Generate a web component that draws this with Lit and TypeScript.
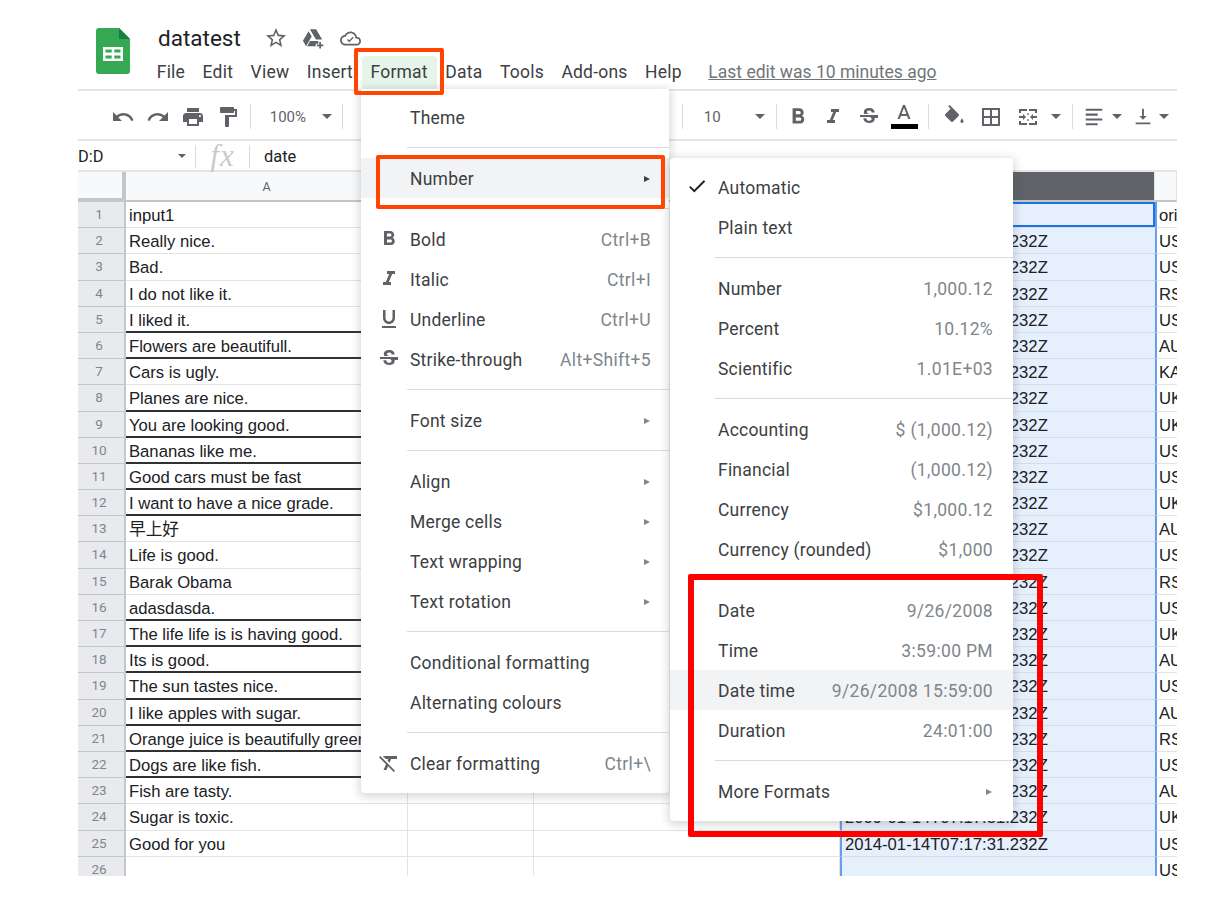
import { LitElement, css, html, svg, nothing } from 'lit';
import { customElement } from 'lit/decorators.js';
import { classMap } from 'lit/directives/class-map.js';

const ICONS: Record<string, string> = {
  undo: 'M12.5 8c-2.65 0-5.05.99-6.9 2.6L2 7v9h9l-3.62-3.62c1.39-1.16 3.16-1.88 5.12-1.88 3.54 0 6.55 2.31 7.6 5.5l2.37-.78C21.08 11.03 17.15 8 12.5 8z',
  redo: 'M18.4 10.6C16.55 8.99 14.15 8 11.5 8c-4.65 0-8.58 3.03-9.96 7.22L3.9 16c1.05-3.19 4.05-5.5 7.6-5.5 1.95 0 3.73.72 5.12 1.88L13 16h9V7l-3.6 3.6z',
  print: 'M19 8H5c-1.66 0-3 1.34-3 3v6h4v4h12v-4h4v-6c0-1.66-1.34-3-3-3zm-3 11H8v-5h8v5zm3-7c-.55 0-1-.45-1-1s.45-1 1-1 1 .45 1 1-.45 1-1 1zm-1-9H6v4h12V3z',
  paint: 'M18 4V3c0-.55-.45-1-1-1H5c-.55 0-1 .45-1 1v4c0 .55.45 1 1 1h12c.55 0 1-.45 1-1V6h1v4H9v11c0 .55.45 1 1 1h2c.55 0 1-.45 1-1v-9h8V4h-3z',
  star: 'M22 9.24l-7.19-.62L12 2 9.19 8.63 2 9.24l5.46 4.73L5.82 21 12 17.27 18.18 21l-1.63-7.03L22 9.24zM12 15.4l-3.76 2.27 1-4.28-3.32-2.88 4.38-.38L12 6.1l1.71 4.04 4.38.38-3.32 2.88 1 4.28L12 15.4z',
  drive: 'M8.6 2.5h6.8l6.6 11.2h-6.8zM7.2 4.6 1 15.1l3.4 5.9 6.2-10.6zM8.8 15.4 5.6 21h9.4v-2.6h2.8v-3zM18.8 16.4h1.9v2.6h2.6v1.9h-2.6v2.6h-1.9v-2.6h-2.6V19h2.6z',
  cloud: 'M19.35 10.04C18.67 6.59 15.64 4 12 4 9.11 4 6.6 5.64 5.35 8.04 2.34 8.36 0 10.91 0 14c0 3.31 2.69 6 6 6h13c2.76 0 5-2.24 5-5 0-2.64-2.05-4.78-4.65-4.96zM19 18H6c-2.21 0-4-1.79-4-4s1.79-4 4-4h.71C7.37 7.69 9.48 6 12 6c3.04 0 5.5 2.46 5.5 5.5v.5H19c1.66 0 3 1.34 3 3s-1.34 3-3 3zM10.6 16.2 8 13.6l1.1-1.1 1.5 1.5 4-4 1.1 1.1z',
  bold: 'M15.6 10.79c.97-.67 1.65-1.77 1.65-2.79 0-2.26-1.75-4-4-4H7v14h7.04c2.09 0 3.71-1.7 3.71-3.79 0-1.52-.86-2.82-2.15-3.42zM10 6.5h3c.83 0 1.5.67 1.5 1.5s-.67 1.5-1.5 1.5h-3v-3zm3.5 9H10v-3h3.5c.83 0 1.5.67 1.5 1.5s-.67 1.5-1.5 1.5z',
  italic: 'M10 4v3h2.21l-3.42 8H6v3h8v-3h-2.21l3.42-8H18V4z',
  strike: 'M6.85 7.08C6.85 4.37 9.45 3 12.24 3c1.64 0 3 .49 3.9 1.28.77.65 1.46 1.73 1.46 3.24h-3.01c0-.31-.05-.59-.15-.85-.29-.86-1.2-1.28-2.25-1.28-1.86 0-2.34 1.02-2.34 1.7 0 .48.25.88.74 1.21.38.25.77.48 1.41.7H7.39c-.21-.34-.54-.89-.54-1.92zM21 12v-2H3v2h9.62c1.15.45 1.96.75 1.96 1.97 0 1-.81 1.67-2.28 1.67-1.54 0-2.93-.54-2.93-2.51H6.4c0 .55.08 1.13.24 1.58.81 2.29 3.32 3.3 5.67 3.3 2.25 0 5.11-.95 5.35-3.72.03-.47.01-.9-.07-1.29H21z',
  underline: 'M12 17c3.31 0 6-2.69 6-6V3h-2.5v8c0 1.93-1.57 3.5-3.5 3.5S8.5 12.93 8.5 11V3H6v8c0 3.31 2.69 6 6 6zm-7 2v2h14v-2H5z',
  colorA: 'M11 2 5.5 16h2.25l1.12-3h6.25l1.12 3h2.25L13 2h-2zm-1.38 9L12 4.67 14.38 11H9.62z',
  fill: 'M16.56 8.94 7.62 0 6.21 1.41l2.38 2.38-5.15 5.15c-.59.59-.59 1.54 0 2.12l5.5 5.5c.29.29.68.44 1.06.44s.77-.15 1.06-.44l5.5-5.5c.59-.58.59-1.53 0-2.12zM20 13.5s-1.6 1.7-1.6 2.8c0 .9.7 1.6 1.6 1.6s1.6-.7 1.6-1.6c0-1.1-1.6-2.8-1.6-2.8z',
  borders: 'M3 3v18h18V3H3zm8 16H5v-6h6v6zm0-8H5V5h6v6zm8 8h-6v-6h6v6zm0-8h-6V5h6v6z',
  merge: 'M3 4h8v2H5v2H3zM13 4h8v4h-2V6h-6zM3 16h2v2h6v2H3zM19 16h2v4h-8v-2h6zM3 11h4V9l3 3-3 3v-2H3zM21 11h-4V9l-3 3 3 3v-2h4zM11.400 8h1.200v2h-1.200zM11.400 14h1.200v2h-1.200z',
  align: 'M3 3h18v2.200H3zM3 8.300h13v2.200H3zM3 13.600h18v2.200H3zM3 18.900h13v2.200H3z',
  valign: 'M16 11h-3V3h-2v8H8l4 4zM4 18v2h16v-2z',
  clear: 'M3.27 5 2 6.27l6.97 6.97L6.5 19h3l1.57-3.66L16.73 21 18 19.73 3.55 5.27zM6 5v.18L8.82 8h2.4l-.72 1.68 2.1 2.1L14.21 8H20V5z',
  check: 'M9 16.17 4.83 12l-1.42 1.41L9 19 21 7l-1.41-1.41z',
};

const icon = (name: string, size = 24) => html`<svg
  width=${size}
  height=${size}
  viewBox="0 0 24 24"
  fill="currentColor"
>
  ${svg`<path d=${ICONS[name]}></path>`}
</svg>`;

interface MenuRow {
  label?: string;
  hint?: string;
  icon?: string;
  arrow?: boolean;
  check?: boolean;
  active?: boolean;
  sep?: boolean;
}

const SEP: MenuRow = { sep: true };

const FORMAT_MENU: MenuRow[] = [
  { label: 'Theme' },
  SEP,
  { label: 'Number', arrow: true, active: true },
  SEP,
  { label: 'Bold', hint: 'Ctrl+B', icon: 'bold' },
  { label: 'Italic', hint: 'Ctrl+I', icon: 'italic' },
  { label: 'Underline', hint: 'Ctrl+U', icon: 'underline' },
  { label: 'Strike-through', hint: 'Alt+Shift+5', icon: 'strike' },
  SEP,
  { label: 'Font size', arrow: true },
  SEP,
  { label: 'Align', arrow: true },
  { label: 'Merge cells', arrow: true },
  { label: 'Text wrapping', arrow: true },
  { label: 'Text rotation', arrow: true },
  SEP,
  { label: 'Conditional formatting' },
  { label: 'Alternating colours' },
  SEP,
  { label: 'Clear formatting', hint: 'Ctrl+\\', icon: 'clear' },
];

const NUMBER_MENU: MenuRow[] = [
  { label: 'Automatic', check: true },
  { label: 'Plain text' },
  SEP,
  { label: 'Number', hint: '1,000.12' },
  { label: 'Percent', hint: '10.12%' },
  { label: 'Scientific', hint: '1.01E+03' },
  SEP,
  { label: 'Accounting', hint: '$ (1,000.12)' },
  { label: 'Financial', hint: '(1,000.12)' },
  { label: 'Currency', hint: '$1,000.12' },
  { label: 'Currency (rounded)', hint: '$1,000' },
  SEP,
  { label: 'Date', hint: '9/26/2008' },
  { label: 'Time', hint: '3:59:00 PM' },
  { label: 'Date time', hint: '9/26/2008 15:59:00', active: true },
  { label: 'Duration', hint: '24:01:00' },
  SEP,
  { label: 'More Formats', arrow: true },
];

const INPUTS = [
  'input1', 'Really nice.', 'Bad.', 'I do not like it.', 'I liked it.',
  'Flowers are beautifull.', 'Cars is ugly.', 'Planes are nice.',
  'You are looking good.', 'Bananas like me.', 'Good cars must be fast',
  'I want to have a nice grade.', '早上好', 'Life is good.', 'Barak Obama',
  'adasdasda.', 'The life life is is having good.', 'Its is good.',
  'The sun tastes nice.', 'I like apples with sugar.',
  'Orange juice is beautifully green', 'Dogs are like fish.', 'Fish are tasty.',
  'Sugar is toxic.', 'Good for you', '',
];

const ORIGINS = [
  'origin', 'USA', 'USA', 'RSA', 'USA', 'AUS', 'KAZ', 'UKR', 'UKR', 'USA', 'USA',
  'UKR', 'AUS', 'USA', 'RSA', 'USA', 'UKR', 'AUS', 'USA', 'AUS', 'RSA', 'USA',
  'AUS', 'UKR', 'USA', 'USA',
];

// rows whose A cell has a dark bottom border
const DARK_ROWS = new Set([5, 6, 8, 9, 10, 11, 12, 16, 17, 18, 19, 20, 21, 22]);

@customElement('app-root')
export class AppRoot extends LitElement {
  static styles = css`
    :host {
      display: block;
      width: 1212px;
      height: 921px;
      padding: 20px 0 0 78px;
      box-sizing: border-box;
      background: #fff;
      font-family: Roboto, sans-serif;
      color: #3c4043;
    }

    .frame {
      position: relative;
      width: 1099px;
      height: 856px;
      overflow: hidden;
    }

    .header {
      display: flex;
      height: 71px;
      box-sizing: border-box;
      border-bottom: 2px solid #e4e5e6;
    }

    .logo {
      margin: 8px 28px 0 18px;
    }

    .title-row {
      display: flex;
      align-items: center;
      height: 36px;
    }

    .title {
      font-size: 22.5px;
      color: #202124;
      width: 106px;
    }

    .title-icons {
      display: flex;
      gap: 13px;
      color: #5f6368;
    }

    .title-icon {
      display: flex;
      justify-content: center;
      align-items: center;
      width: 24px;
      height: 24px;
    }

    .menubar {
      display: flex;
      align-items: center;
      margin-left: -10px;
      height: 33px;
      font-size: 17.5px;
      letter-spacing: 0.22px;
    }

    .menubar span {
      padding: 0 8.75px;
      line-height: 33px;
      white-space: nowrap;
    }

    .menubar .open {
      background: #e6f4ea;
      border-radius: 4px 4px 0 0;
    }

    .menubar .last-edit {
      margin-left: 9px;
      color: #70757a;
      letter-spacing: 0;
      text-decoration: underline;
    }

    .toolbar {
      display: flex;
      align-items: center;
      height: 50px;
      padding: 3px 0 0 27px;
      box-sizing: border-box;
      border-bottom: 2px solid #e4e5e6;
      color: #5f6368;
      white-space: nowrap;
    }

    .tool {
      flex: none;
      display: flex;
      justify-content: center;
      align-items: center;
      width: 35.5px;
    }

    .tool.narrow {
      width: 35.2px;
    }

    .tool.color {
      flex-direction: column;
      color: #5f6368;
      margin-top: -2px;
    }

    .bar {
      width: 27px;
      height: 5px;
      margin-top: -3px;
      background: #000;
    }

    .caret {
      flex: none;
      width: 0;
      height: 0;
      border: 5px solid transparent;
      border-top-color: #5f6368;
      border-bottom: none;
    }

    .divider {
      flex: none;
      width: 1px;
      height: 25px;
      background: #dadce0;
    }

    .zoom-val {
      flex: none;
      font-size: 15px;
      width: 52px;
      margin-left: 19px;
    }

    .font-size {
      flex: none;
      font-size: 15px;
      width: 50px;
      margin-left: 21px;
    }

    .formula {
      display: flex;
      align-items: center;
      height: 31px;
      padding-top: 1px;
      box-sizing: border-box;
      border-bottom: 2px solid #e4e5e6;
      font-size: 16.4px;
      color: #202124;
    }

    .name-box {
      width: 100px;
    }

    .formula .caret {
      border-width: 4px;
      border-bottom: none;
      margin-right: 9px;
    }

    .fx {
      width: 53px;
      text-align: center;
      font: italic 31px/28px 'Liberation Serif', serif;
      letter-spacing: 1px;
      color: #c9cbcc;
    }

    .formula .divider {
      height: 23px;
    }

    .formula-value {
      margin-left: 14px;
    }

    .grid {
      display: grid;
      grid-template-columns: 48px 282px 126px 306px 315px 22px;
      grid-template-rows: 30px;
      grid-auto-rows: 26.2px;
      font-family: 'Liberation Sans', 'Noto Sans CJK SC', sans-serif;
      font-size: 16.67px;
      color: #202124;
    }

    .cell {
      box-sizing: border-box;
      padding-left: 3px;
      line-height: 27px;
      border-right: 1px solid #e2e3e3;
      border-bottom: 1px solid #e2e3e3;
      white-space: nowrap;
      overflow: hidden;
    }

    .cell.dark {
      border-bottom: 2px solid #2f3133;
    }

    .cell.sel {
      background: #e6effc;
      border-bottom-color: #d6dde8;
      border-right: none;
      border-left: 2px solid #6a9cec;
      padding-left: 3px;
    }

    .cell.last {
      border-left: 2px solid #6a9cec;
      border-right: none;
      padding-left: 2px;
    }

    .cell.active {
      box-shadow: inset 0 0 0 2px #1a73e8;
    }

    .corner {
      background: #f8f9fa;
      border-right: 4px solid #c4c6c8;
      border-bottom: 4px solid #c4c6c8;
    }

    .col-head {
      padding: 0;
      background: #f8f9fa;
      text-align: center;
      font: 12.5px/29px Roboto, sans-serif;
      color: #5f6368;
      border-bottom: 2px solid #c4c6c8;
    }

    .col-head.sel-head {
      background: #5f6368;
      color: #fff;
    }

    .row-num {
      padding: 0 4px 0 0;
      background: #e8eaed;
      text-align: center;
      font: 13.5px/25px Roboto, sans-serif;
      color: #80868b;
      border-right: 2px solid #c4c6c8;
      border-bottom: 1px solid #c4c6c8;
    }

    .menu {
      position: absolute;
      box-sizing: border-box;
      padding: 8px 0 10px;
      background: #fff;
      border-radius: 0 0 4px 4px;
      box-shadow: 0 2px 8px 2px rgba(60, 64, 67, 0.2);
      font-size: 17.5px;
      letter-spacing: 0.22px;
    }

    .menu.format {
      left: 283px;
      top: 69px;
      width: 308px;
      height: 704px;
    }

    .menu.number {
      left: 592px;
      top: 138px;
      width: 343px;
      height: 663px;
      padding-top: 9px;
      border-radius: 4px;
    }

    .row {
      position: relative;
      display: flex;
      align-items: center;
      justify-content: space-between;
      height: 39px;
      padding: 1px 18px 0 49px;
    }

    .number .row {
      padding: 1px 20px 0 48px;
    }

    .row.active {
      background: #f1f3f4;
    }

    .hint {
      color: #80868b;
      letter-spacing: 0.34px;
    }

    .row-icon {
      position: absolute;
      left: 16px;
      top: 8px;
      display: flex;
      color: #5f6368;
    }

    .number .row-icon {
      left: 16px;
      color: #202124;
    }

    .arrow {
      width: 0;
      height: 0;
      border-left: 6px solid #80868b;
      border-top: 3px solid transparent;
      border-bottom: 3px solid transparent;
      margin-right: 1px;
    }

    .row.active .arrow {
      border-left-color: #3c4043;
    }

    .sep {
      height: 1px;
      margin: 10px 0 10px 46px;
      background: #dadce0;
    }

    .number .sep {
      margin-left: 45px;
    }

    .mark {
      position: absolute;
      box-sizing: border-box;
      pointer-events: none;
    }

    .mark.tab {
      left: 276px;
      top: 28px;
      width: 90px;
      height: 47px;
      border: 4px solid #ff4500;
      border-radius: 2px;
    }

    .mark.item {
      left: 298px;
      top: 135px;
      width: 289px;
      height: 54px;
      border: 4px solid #ff4500;
      border-radius: 2px;
    }

    .mark.range {
      left: 610px;
      top: 554px;
      width: 355px;
      height: 263px;
      border: 6px solid #ff0000;
      border-radius: 2px;
    }
  `;

  private renderRow(r: MenuRow) {
    if (r.sep) return html`<div class="sep"></div>`;
    return html`<div class=${classMap({ row: true, active: !!r.active })}>
      ${r.icon ? html`<span class="row-icon">${icon(r.icon, 24)}</span>` : nothing}
      ${r.check ? html`<span class="row-icon">${icon('check', 22)}</span>` : nothing}
      <span>${r.label}</span>
      ${r.hint ? html`<span class="hint">${r.hint}</span>` : nothing}
      ${r.arrow ? html`<span class="arrow"></span>` : nothing}
    </div>`;
  }

  private renderGrid() {
    // column E is so narrow here that its letter falls outside the crop
    const heads = ['A', 'B', 'C', 'D', ''];
    return html`<div class="grid">
      <div class="cell corner"></div>
      ${heads.map(
        (h) => html`<div class=${classMap({ cell: true, 'col-head': true, 'sel-head': h === 'D' })}>${h}</div>`
      )}
      ${INPUTS.map((text, i) => {
        const n = i + 1;
        const date = n === 1 ? 'date' : n === 26 ? '' : n === 24 ? '2009-01-14T07:17:31.232Z' : '2014-01-14T07:17:31.232Z';
        return html`
          <div class="cell row-num">${n}</div>
          <div class=${classMap({ cell: true, dark: DARK_ROWS.has(n) })}>${text}</div>
          <div class="cell"></div>
          <div class="cell"></div>
          <div class=${classMap({ cell: true, sel: true, active: n === 1 })}>${date}</div>
          <div class="cell last">${ORIGINS[i]}</div>
        `;
      })}
    </div>`;
  }

  render() {
    return html`<div class="frame">
      <div class="header">
        <svg class="logo" width="34" height="46" viewBox="0 0 34 46">
          <path d="M3 0h20l11 11v32a3 3 0 0 1-3 3H3a3 3 0 0 1-3-3V3a3 3 0 0 1 3-3z" fill="#34a853"></path>
          <path d="M23 0l11 11H23z" fill="#188038"></path>
          <path d="M7 19h20v14H7zM9.5 21.5v3h6.2v-3zM18.3 21.5v3h6.2v-3zM9.5 27.500v3h6.2v-3zM18.3 27.500v3h6.2v-3z" fill="#fff" fill-rule="evenodd"></path>
        </svg>
        <div>
          <div class="title-row">
            <span class="title">datatest</span>
            <span class="title-icons">
              <span class="title-icon">${icon('star')}</span>
              <span class="title-icon">${icon('drive', 22)}</span>
              <span class="title-icon">${icon('cloud', 21)}</span>
            </span>
          </div>
          <div class="menubar">
            <span>File</span><span>Edit</span><span>View</span><span>Insert</span>
            <span class="open">Format</span><span>Data</span><span>Tools</span>
            <span>Add-ons</span><span>Help</span>
            <span class="last-edit">Last edit was 10 minutes ago</span>
          </div>
        </div>
      </div>

      <div class="toolbar">
        <span class="tool narrow">${icon('undo')}</span>
        <span class="tool narrow">${icon('redo')}</span>
        <span class="tool narrow">${icon('print')}</span>
        <span class="tool narrow">${icon('paint')}</span>
        <span class="divider" style="margin-left:4px"></span>
        <span class="zoom-val">100%</span>
        <span class="caret"></span>
        <span class="divider" style="margin-left:10px"></span>
        <span class="divider" style="margin-left:339px"></span>
        <span class="font-size">10</span>
        <span class="caret" style="margin-left:1px"></span>
        <span class="divider" style="margin-left:11px"></span>
        <span class="tool" style="margin-left:3px">${icon('bold', 26)}</span>
        <span class="tool">${icon('italic')}</span>
        <span class="tool">${icon('strike')}</span>
        <span class="tool color">${icon('colorA')}<span class="bar"></span></span>
        <span class="divider" style="margin-left:6px"></span>
        <span class="tool" style="margin-left:7px">${icon('fill')}</span>
        <span class="tool" style="margin-left:2px">${icon('borders')}</span>
        <span class="tool" style="margin-left:1px">${icon('merge')}</span>
        <span class="caret" style="margin-left:6px"></span>
        <span class="divider" style="margin-left:11px"></span>
        <span class="tool" style="margin-left:3px">${icon('align', 22)}</span>
        <span class="caret" style="margin-left:0"></span>
        <span class="tool" style="margin-left:3px">${icon('valign', 22)}</span>
        <span class="caret" style="margin-left:-1px"></span>
      </div>

      <div class="formula">
        <span class="name-box">D:D</span>
        <span class="caret"></span>
        <span class="divider"></span>
        <span class="fx">fx</span>
        <span class="divider"></span>
        <span class="formula-value">date</span>
      </div>

      ${this.renderGrid()}

      <div class="menu format">${FORMAT_MENU.map((r) => this.renderRow(r))}</div>
      <div class="menu number">${NUMBER_MENU.map((r) => this.renderRow(r))}</div>

      <div class="mark tab"></div>
      <div class="mark item"></div>
      <div class="mark range"></div>
    </div>`;
  }
}

declare global {
  interface HTMLElementTagNameMap {
    'app-root': AppRoot;
  }
}
